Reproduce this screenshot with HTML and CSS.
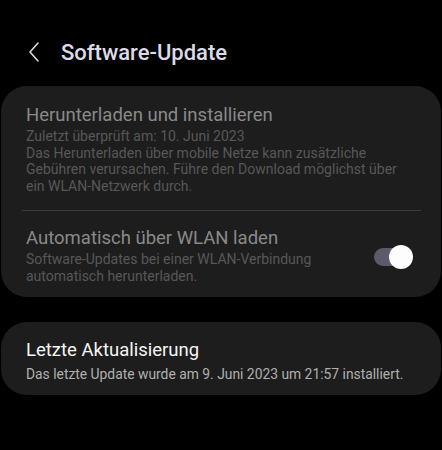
FILE: index.html
```html
<!DOCTYPE html>
<html>
<head>
  <title>Software-Update</title>
  <link rel="stylesheet" href="styles.css">
</head>
<body>
  <header class="topbar">
    <svg class="back" width="14" height="22" viewBox="0 0 14 22">
      <path d="M11 2 L3 11 L11 20" fill="none" stroke="#d8d8e0" stroke-width="1.6" stroke-linecap="round" stroke-linejoin="round"/>
    </svg>
    <h1 class="title">Software-Update</h1>
  </header>

  <section class="card">
    <div class="item item-first">
      <h2 class="item-title muted">Herunterladen und installieren</h2>
      <p class="item-text dim wrap">Zuletzt überprüft am: 10. Juni 2023<br>Das Herunterladen über mobile Netze kann zusätzliche Gebühren verursachen. Führe den Download möglichst über ein WLAN-Netzwerk durch.</p>
    </div>
    <div class="divider"></div>
    <div class="item item-row">
      <div>
        <h2 class="item-title muted">Automatisch über WLAN laden</h2>
        <p class="item-text dim">Software-Updates bei einer WLAN-Verbindung<br>automatisch herunterladen.</p>
      </div>
      <div class="switch">
        <span class="knob"></span>
      </div>
    </div>
  </section>

  <section class="card card-last">
    <div class="item item-last">
      <h2 class="item-title">Letzte Aktualisierung</h2>
      <p class="item-text">Das letzte Update wurde am 9. Juni 2023 um 21:57 installiert.</p>
    </div>
  </section>
</body>
</html>
```

FILE: styles.css
```css
body {
  background-color: #000;
  margin: 0;
  padding: 0;
  font-family: Roboto, "Noto Sans", sans-serif;
  width: 442px;
}

.topbar {
  display: flex;
  align-items: center;
  height: 86px;
  padding-left: 27px;
  padding-top: 18px;
  box-sizing: border-box;
}

.back {
  margin-right: 20px;
}

.title {
  margin: 0;
  font-size: 22px;
  font-weight: 500;
  color: #dcdce8;
}

.card {
  background-color: #1d1d1d;
  border-radius: 26px;
  margin: 0 1px;
}

.card-last {
  margin-top: 25px;
}

.item {
  padding: 14px 25px 13px;
}

.item-first {
  padding-top: 16px;
  padding-bottom: 16px;
}

.item-last {
  padding-top: 15px;
  padding-bottom: 12px;
}

.item-last .item-title {
  margin-bottom: 3px;
}

.item-last .item-text {
  font-size: 13.85px;
}

.item-row {
  display: flex;
  align-items: center;
  justify-content: space-between;
}

.item-title {
  margin: 0;
  font-size: 18.5px;
  font-weight: 400;
  line-height: 26px;
  color: #f5f5f5;
}

.item-text {
  margin: 0;
  font-size: 14px;
  line-height: 16.5px;
  color: #b0b0b0;
}

.wrap {
  max-width: 372px;
}

.muted {
  color: #8a8a8a;
}

.dim {
  color: #585858;
}

.divider {
  height: 1px;
  background-color: #3a3a3a;
  margin: 0 20px 0 21px;
}

.switch {
  position: relative;
  width: 38px;
  height: 18px;
  border-radius: 9px;
  background-color: #5b5a68;
  margin-right: 4px;
  margin-top: 4px;
}

.knob {
  position: absolute;
  right: -1px;
  top: -3px;
  width: 24px;
  height: 24px;
  border-radius: 50%;
  background-color: #fdfdfd;
}
```
